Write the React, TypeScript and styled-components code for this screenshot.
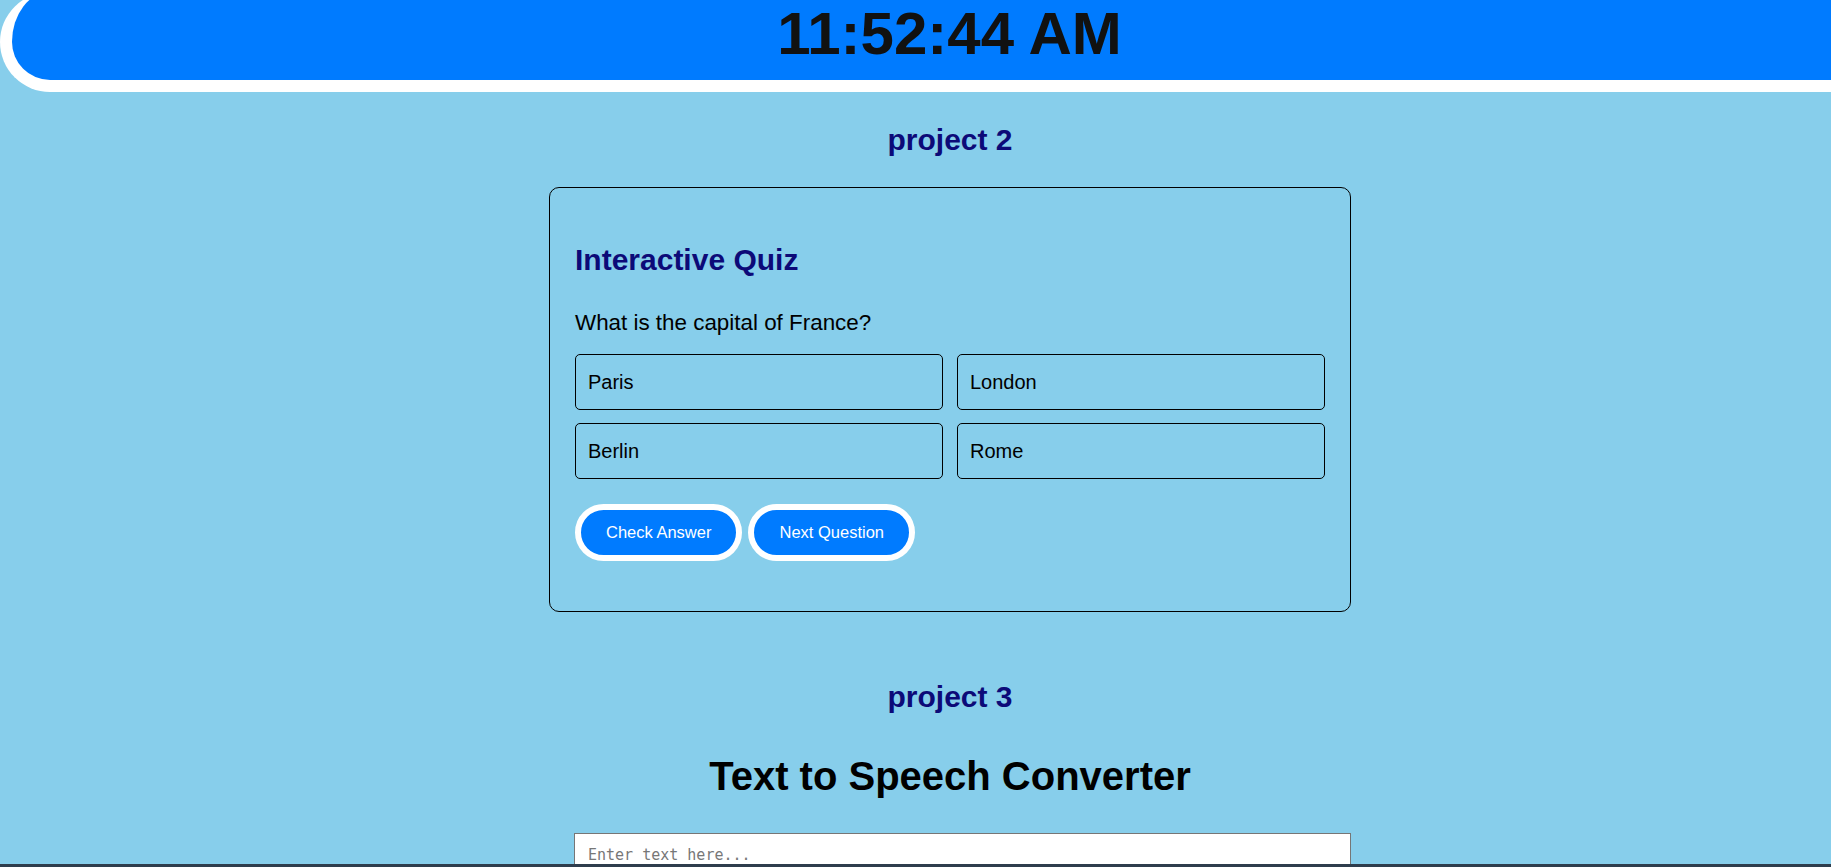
import styled, { createGlobalStyle } from "styled-components";

const GlobalStyle = createGlobalStyle`
  html, body {
    margin: 0;
    padding: 0;
    overflow: hidden;
    background: #87ceeb;
    font-family: "Liberation Sans", Arial, sans-serif;
  }
`;

const Page = styled.div`
  width: 1900px;
  min-height: 100vh;
`;

const ClockBar = styled.header`
  margin-top: -8px;
  height: 84px;
  padding: 0 13px 4px 0;
  background: #007bff;
  border: 12px solid #fff;
  border-top: none;
  border-right: none;
  border-radius: 50px 0 0 50px;
  color: #111;
  font-size: 60px;
  font-weight: bold;
  line-height: 84px;
  text-align: center;
`;

const SectionTitle = styled.h2<{ $top: number; $bottom: number }>`
  margin: ${(p) => p.$top}px 0 ${(p) => p.$bottom}px;
  color: #0c0a78;
  font-size: 30px;
  text-align: center;
`;

const QuizCard = styled.section`
  width: 750px;
  margin: 0 auto 68px;
  padding: 25px;
  border: 1px solid #000;
  border-radius: 10px;
`;

const QuizTitle = styled.h2`
  margin: 30px 0 0;
  color: #0c0a78;
  font-size: 30px;
`;

const Question = styled.p`
  margin: 33px 0 18px;
  font-size: 22.4px;
  color: #000;
`;

const Options = styled.div`
  display: grid;
  grid-template-columns: 1fr 1fr;
  column-gap: 14px;
  row-gap: 13px;
`;

const Option = styled.button`
  height: 56px;
  padding: 0 12px;
  background: transparent;
  border: 1px solid #000;
  border-radius: 5px;
  color: #000;
  font-family: "Liberation Sans", Arial, sans-serif;
  font-size: 20px;
  text-align: left;
`;

const Actions = styled.div`
  display: flex;
  gap: 6px;
  margin: 25px 0;
`;

const PillButton = styled.button`
  height: 57px;
  padding: 0 25px;
  background: #007bff;
  border: 6px solid #fff;
  border-radius: 30px;
  color: #fff;
  font-family: "Liberation Sans", Arial, sans-serif;
  font-size: 16.5px;
`;

const ConverterTitle = styled.h1`
  margin: 40px 0 34px;
  color: #000;
  font-size: 40px;
  text-align: center;
`;

const ConverterBody = styled.div`
  width: 802px;
  margin: 0 auto;
  padding-left: 25px;
  box-sizing: border-box;
`;

const TextInput = styled.textarea`
  display: block;
  width: 100%;
  height: 130px;
  box-sizing: border-box;
  padding: 12px 13px;
  background: #fff;
  border: 1px solid #767676;
  font-family: "DejaVu Sans Mono", "Liberation Mono", monospace;
  font-size: 15px;
  resize: none;

  &::placeholder {
    color: #777;
  }
`;

const EdgeLine = styled.div`
  position: fixed;
  left: 0;
  right: 0;
  bottom: 0;
  height: 3px;
  background: #2e3d4d;
`;

export default function App() {
  return (
    <>
      <GlobalStyle />
      <Page>
        <ClockBar>11:52:44 AM</ClockBar>

        <SectionTitle $top={31} $bottom={30}>project 2</SectionTitle>
        <QuizCard>
          <QuizTitle>Interactive Quiz</QuizTitle>
          <Question>What is the capital of France?</Question>
          <Options>
            <Option>Paris</Option>
            <Option>London</Option>
            <Option>Berlin</Option>
            <Option>Rome</Option>
          </Options>
          <Actions>
            <PillButton>Check Answer</PillButton>
            <PillButton>Next Question</PillButton>
          </Actions>
        </QuizCard>

        <SectionTitle $top={0} $bottom={0}>project 3</SectionTitle>
        <ConverterTitle>Text to Speech Converter</ConverterTitle>
        <ConverterBody>
          <TextInput placeholder="Enter text here..." />
        </ConverterBody>
      </Page>
      <EdgeLine />
    </>
  );
}
